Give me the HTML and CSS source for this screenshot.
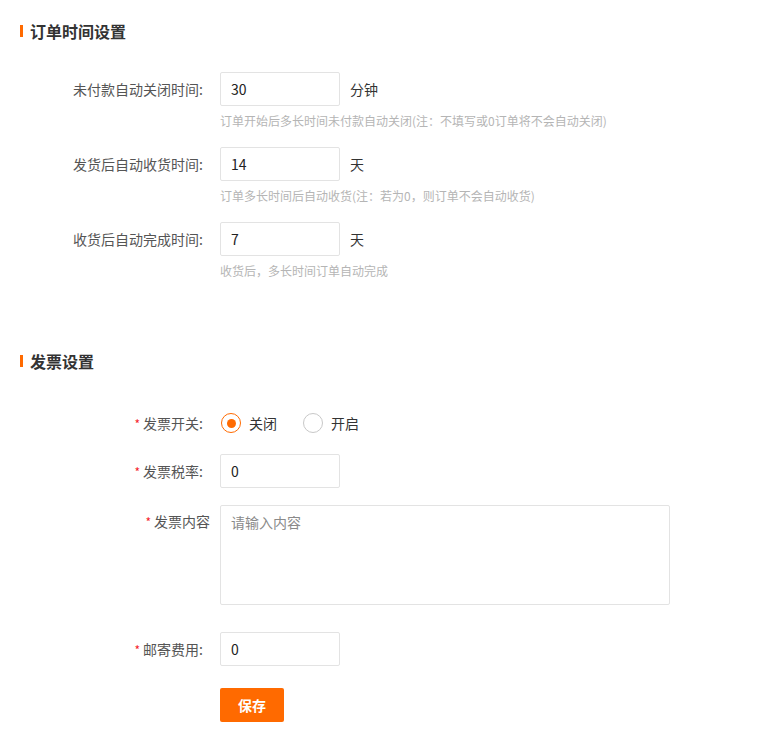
FILE: index.html
```html
<!DOCTYPE html>
<html lang="zh-CN">
<head>
<meta charset="utf-8">
<title>订单设置</title>
<link rel="stylesheet" href="styles.css">
</head>
<body>
<div class="page">
  <section class="section">
    <h2 class="section-title">订单时间设置</h2>
    <div class="section-body first">
      <div class="form-item">
        <label class="label">未付款自动关闭时间:</label>
        <div class="control">
          <div class="line"><input class="input" type="text" value="30"><span class="unit">分钟</span></div>
          <div class="hint">订单开始后多长时间未付款自动关闭(注：不填写或0订单将不会自动关闭)</div>
        </div>
      </div>
      <div class="form-item gap17">
        <label class="label">发货后自动收货时间:</label>
        <div class="control">
          <div class="line"><input class="input" type="text" value="14"><span class="unit">天</span></div>
          <div class="hint">订单多长时间后自动收货(注：若为0，则订单不会自动收货)</div>
        </div>
      </div>
      <div class="form-item gap17">
        <label class="label">收货后自动完成时间:</label>
        <div class="control">
          <div class="line"><input class="input" type="text" value="7"><span class="unit">天</span></div>
          <div class="hint">收货后，多长时间订单自动完成</div>
        </div>
      </div>
    </div>
  </section>

  <section class="section second">
    <h2 class="section-title">发票设置</h2>
    <div class="section-body">
      <div class="form-item radio-item">
        <label class="label"><span class="req">*</span>发票开关:</label>
        <div class="control">
          <div class="line radios">
            <span class="radio checked"><span class="dot"></span></span><span class="radio-text">关闭</span>
            <span class="radio"><span class="dot"></span></span><span class="radio-text">开启</span>
          </div>
        </div>
      </div>
      <div class="form-item gap13">
        <label class="label"><span class="req">*</span>发票税率:</label>
        <div class="control"><input class="input" type="text" value="0"></div>
      </div>
      <div class="form-item gap16">
        <label class="label top"><span class="req">*</span>发票内容</label>
        <div class="control"><textarea class="textarea" placeholder="请输入内容"></textarea></div>
      </div>
      <div class="form-item gap27">
        <label class="label"><span class="req">*</span>邮寄费用:</label>
        <div class="control"><input class="input" type="text" value="0"></div>
      </div>
      <div class="form-item gap21">
        <span class="label"></span>
        <div class="control"><button class="btn" type="button">保存</button></div>
      </div>
    </div>
  </section>
</div>
</body>
</html>
```

FILE: styles.css
```css
* { box-sizing: border-box; }
html, body { margin: 0; padding: 0; background: #fff; }
body {
  font-family: "Microsoft YaHei", "Noto Sans CJK SC", "Liberation Sans", sans-serif;
  font-size: 14px;
  color: #333;
}
.page { padding: 20px 0 0 20px; width: 760px; }
.section-title {
  margin: 0;
  font-size: 16px;
  font-weight: bold;
  color: #333;
  line-height: 22px;
  display: flex;
  align-items: center;
  gap: 7px;
}
.section-title::before {
  content: "";
  display: block;
  width: 3px;
  height: 12px;
  background: #ff6a00;
}
.section-body { margin-top: 30px; }
.section.second { margin-top: 70px; }
.section.second .section-body { margin-top: 34px; }
.form-item { display: flex; align-items: flex-start; }
.gap13 { margin-top: 13px; }
.gap16 { margin-top: 16px; }
.gap17 { margin-top: 17px; }
.gap21 { margin-top: 21px; }
.gap27 { margin-top: 27px; }
.label {
  width: 200px;
  flex: none;
  text-align: right;
  padding-right: 17px;
  line-height: 34px;
  color: #555;
  font-size: 14px;
  white-space: nowrap;
}
.label.top { line-height: 32px; padding-right: 10px; }
.req { color: #f5222d; margin-right: 3px; font-size: 12px; }
.control { display: flex; flex-direction: column; }
.line { display: flex; align-items: center; }
.input {
  width: 120px;
  height: 34px;
  border: 1px solid #e3e3e3;
  border-radius: 2px;
  padding: 0 10px;
  font: inherit;
  font-size: 14px;
  color: #222;
  outline: none;
  background: #fff;
}
.unit { margin-left: 10px; font-size: 14px; color: #333; }
.hint {
  margin-top: 6px;
  font-size: 12px;
  line-height: 18px;
  color: #b5b5b5;
}
.radios { height: 34px; }
.radio {
  width: 20px;
  height: 20px;
  border: 1px solid #c8c8c8;
  border-radius: 50%;
  display: flex;
  align-items: center;
  justify-content: center;
  margin-left: 1px;
}
.radio.checked { border-color: #ff6a00; }
.radio.checked .dot { width: 9px; height: 9px; border-radius: 50%; background: #ff6a00; }
.radio-text { margin-left: 8px; margin-right: 25px; font-size: 14px; color: #333; }
.textarea {
  width: 450px;
  height: 100px;
  border: 1px solid #e3e3e3;
  border-radius: 2px;
  padding: 6px 10px;
  font: inherit;
  font-size: 14px;
  line-height: 20px;
  resize: none;
  outline: none;
}
.textarea::placeholder { color: #8a8a8a; }
.btn {
  width: 64px;
  height: 34px;
  background: #ff6a00;
  color: #fff;
  border: none;
  border-radius: 2px;
  font: inherit;
  font-size: 14px;
  font-weight: bold;
  padding: 0;
}
```
